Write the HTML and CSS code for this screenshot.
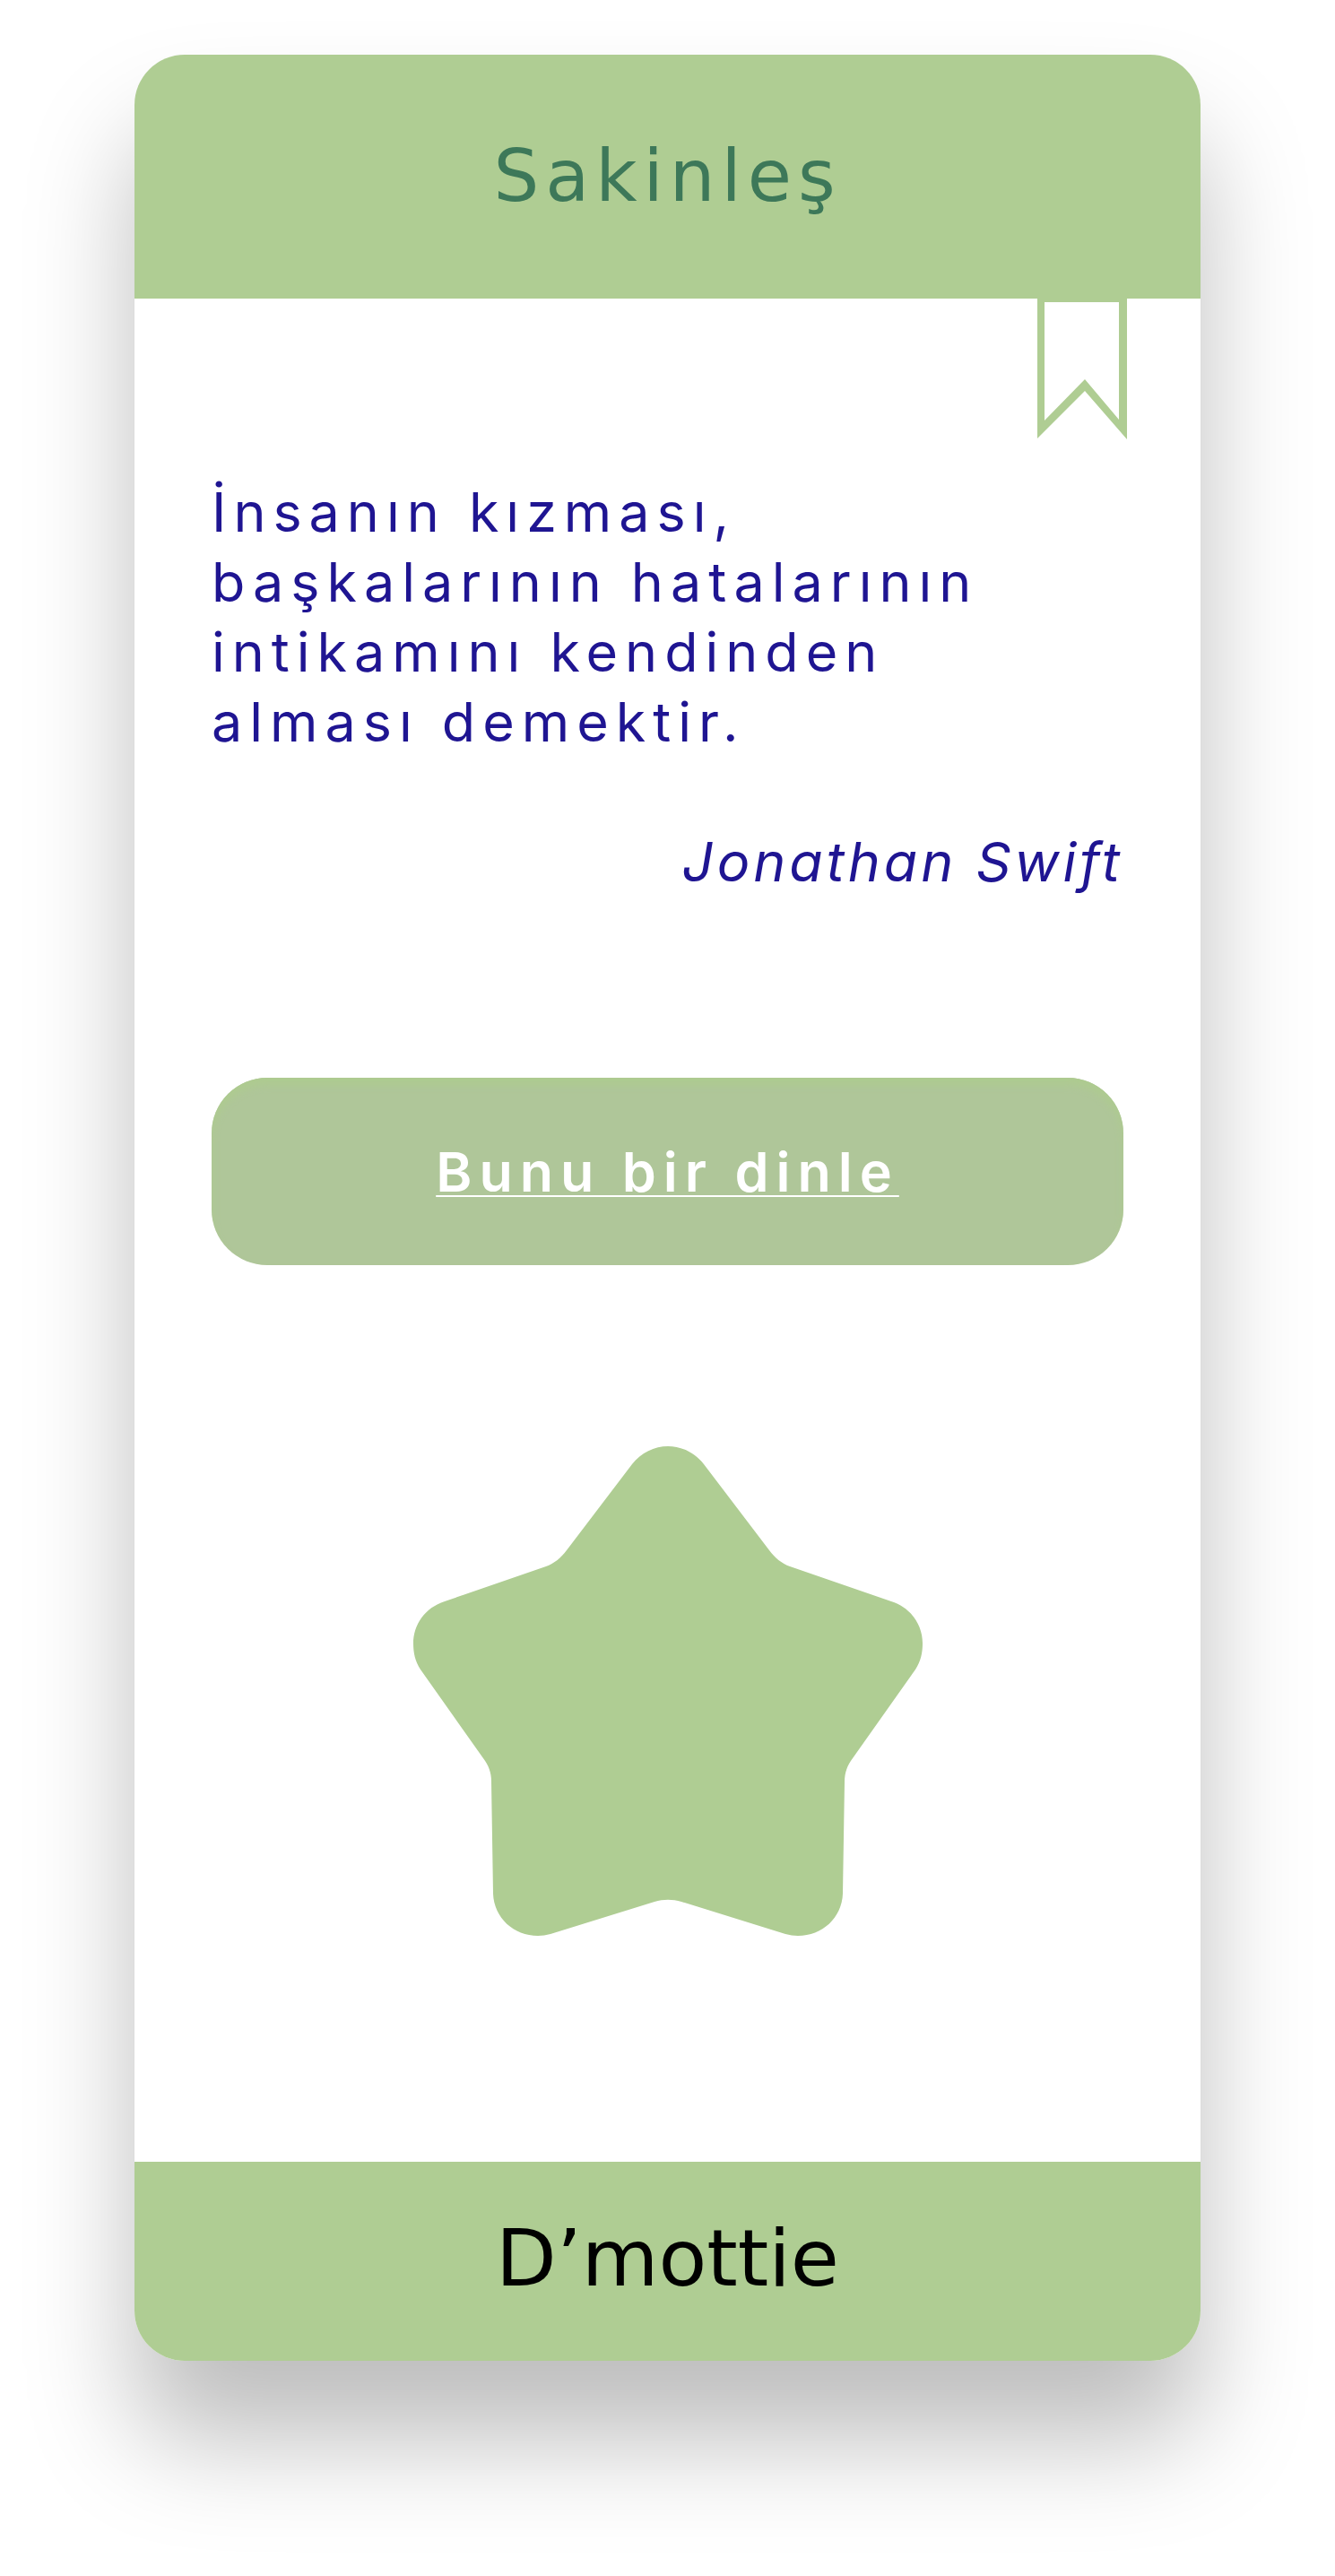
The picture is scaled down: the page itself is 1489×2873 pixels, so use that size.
FILE: index.html
```html
<!DOCTYPE html>
<html lang="tr">
<head>
  <meta charset="utf-8">
  <meta name="viewport" content="width=device-width, initial-scale=1">
  <title>Sakinleş</title>
  <link rel="stylesheet" href="styles.css">
</head>
<body class="page">
  <article class="card">
    <header class="card-header">
      <h1 class="title">Sakinleş</h1>
    </header>
    <main class="card-body">
      <button class="bookmark" type="button" aria-label="Kaydet">
        <svg class="bookmark-icon" viewBox="0 0 100 157" aria-hidden="true">
          <path class="shape" fill-rule="evenodd" d="M0 0H100V157L53 103L0 156ZM8 4V136L53 90L91 135V4Z"/>
        </svg>
      </button>
      <blockquote class="quote">
        <p class="quote-text">İnsanın kızması,<br>başkalarının hatalarının<br>intikamını kendinden<br>alması demektir.</p>
        <footer class="author">Jonathan Swift</footer>
      </blockquote>
      <a class="listen" href="#dinle">Bunu bir dinle</a>
      <svg class="star" viewBox="0 0 568 546" aria-hidden="true">
        <path class="shape" d="M244 20C254 7 269 0 284 0C299 0 314 7 324 20L397 116C403 124 411 131 420 134L533 173C555 180 568 199 568 220C568 230 566 240 560 249L490 348C484 356 481 364 481 374L479 499C478 526 456 546 429 546C424 546 420 545 415 544L299 508C289 505 279 505 269 508L153 544C148 545 144 546 139 546C112 546 90 526 89 499L87 374C87 364 84 356 78 348L8 249C2 240 0 230 0 220C0 199 13 180 35 173L148 134C157 131 165 124 171 116Z"/>
      </svg>
    </main>
    <footer class="card-footer">
      <p class="brand">D’mottie</p>
    </footer>
  </article>
</body>
</html>
```

FILE: styles.css
```css
:root {
  --green: #afcd93;
  --ink: #1f1592;
}

* {
  box-sizing: border-box;
  margin: 0;
}

.page {
  padding: 61px 150px 240px;
  background: #fff;
  font-family: Inter, "Open Sans", sans-serif;
}

.card {
  border-radius: 56px;
  background: #fff;
  box-shadow: 0 88px 120px rgba(0, 0, 0, 0.26);
}

.card-header,
.card-footer {
  display: flex;
  align-items: center;
  justify-content: center;
  background: var(--green);
  font-family: "DejaVu Sans", sans-serif;
}

.card-header {
  padding: 88px 32px;
  border-radius: 56px 56px 0 0;
}

.card-footer {
  padding: 53px 32px 59px;
  border-radius: 0 0 56px 56px;
}

.title {
  color: #3d7859;
  font-size: 80px;
  font-weight: 400;
  line-height: 96px;
  letter-spacing: 7px;
}

.card-body {
  position: relative;
  display: flex;
  flex-direction: column;
  align-items: center;
  gap: 202px;
  padding: 199px 86px 252px;
}

/* Ribbon hanging over the page from the header's lower edge */
.bookmark {
  position: absolute;
  top: 0;
  right: 82px;
  padding: 0;
  border: 0;
  background: none;
  cursor: pointer;
}

.bookmark-icon {
  display: block;
  width: 100px;
}

.shape {
  fill: var(--green);
}

.quote {
  display: flex;
  flex-direction: column;
  gap: 78px;
  width: 100%;
  color: var(--ink);
  font-size: 61px;
  line-height: 78px;
  letter-spacing: 8px;
}

.author {
  font-style: italic;
  letter-spacing: 4px;
  text-align: right;
}

.listen {
  width: 100%;
  padding: 66px 32px 65px;
  border-radius: 62px;
  background: #afc699;
  box-shadow: inset 0 8px 8px #aecb90;
  color: #fff;
  font-size: 61px;
  font-weight: 600;
  line-height: 78px;
  letter-spacing: 8px;
  text-align: center;
  text-decoration: underline 2px;
  text-underline-offset: 4px;
}

.star {
  display: block;
  width: 568px;
  max-width: 100%;
}

.brand {
  color: #000;
  font-size: 88px;
  line-height: 110px;
}
```
